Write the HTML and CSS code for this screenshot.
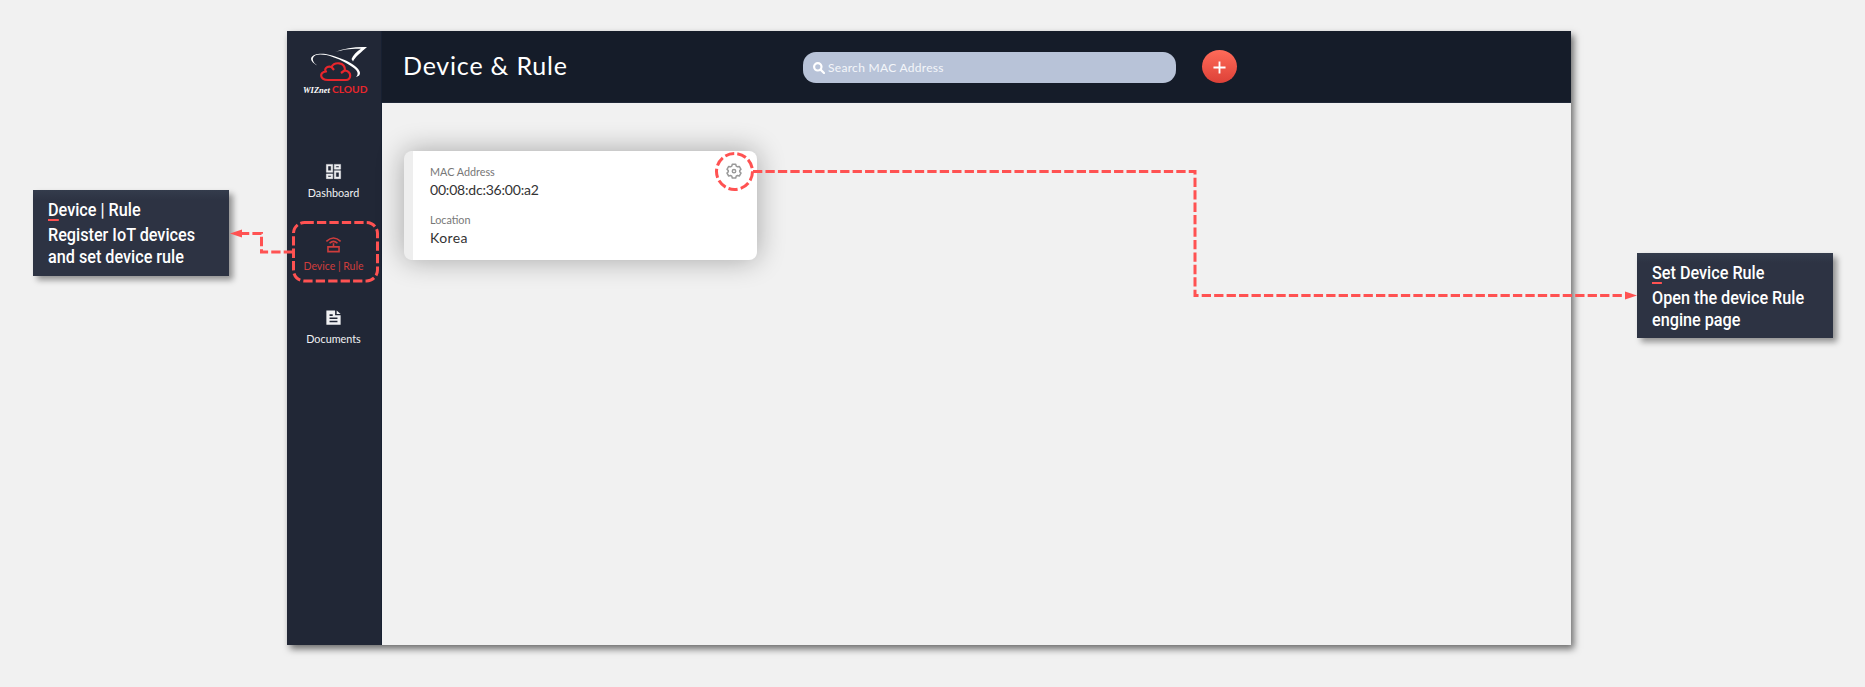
FILE: index.html
```html
<!DOCTYPE html>
<html lang="en">
<head>
<meta charset="utf-8">
<title>Device &amp; Rule</title>
<link rel="stylesheet" href="styles.css">
</head>
<body>
<div class="stage">
  <aside class="callout callout-left">
    <h2><span class="accent">D</span>evice | Rule</h2>
    <p>Register IoT devices<br>and set device rule</p>
  </aside>

  <div class="app">
    <nav class="sidebar">
      <svg class="logo" viewBox="0 0 85 70">
        <path class="white" d="M23 31C8 23 20 16 35 20C51 24 65 32 65 38C65 40 64 41 61 42C65 38 62 34 51 28C38 20 20 16 18 23C17 26 20 29 23 31Z"/>
        <path class="white" d="M40 17C50 13 61 11.500 72 12C67 16.500 60 22 58 26.500L56.500 24C58 20 61.500 16.500 66 13.700C55 13.500 48 14.700 40 17Z"/>
        <path class="cloud" d="M33 45H51C56 45 57.500 37 50 35.500C50 26 39 27 36.500 32C31 30.500 29 35 31 36.500C24 37 24.500 45 33 45ZM49.500 35.500L46 38M36.500 32L39 35"/>
        <text class="brand" x="8" y="57.500" textLength="27" lengthAdjust="spacingAndGlyphs">WIZnet</text>
        <text class="brand-cloud" x="37" y="58" textLength="35.500" lengthAdjust="spacingAndGlyphs">CLOUD</text>
      </svg>
      <div class="menu">
        <a class="item">
          <svg class="bold" viewBox="0 0 24 24"><path d="M19 5v2h-4V5h4M9 5v6H5V5h4m10 8v6h-4v-6h4M9 17v2H5v-2h4M21 3h-8v6h8V3zM11 3H3v10h8V3zm10 8h-8v10h8V11zm-10 4H3v6h8v-6z"/></svg>
          <span>Dashboard</span>
        </a>
        <a class="item active">
          <svg viewBox="0 0 24 24"><path class="line" d="M5 15H19V21H5ZM12 15V10.500M3 8Q12-.5 21 8M7 10.500Q12 5.500 17 10.500"/></svg>
          <span>Device | Rule</span>
        </a>
        <a class="item">
          <svg viewBox="0 0 24 24"><path fill-rule="evenodd" d="M3 3H14V9H21V21H3ZM7 8V10H11V8ZM7 12V14H17V12ZM7 16V18H17V16ZM16 3L21 7.500H16Z"/></svg>
          <span>Documents</span>
        </a>
      </div>
    </nav>
    <div class="main">
      <header class="topbar">
        <h1>Device &amp; Rule</h1>
        <div class="search">
          <svg viewBox="0 0 12 12"><circle cx="4.800" cy="4.800" r="3.700"/><path d="M7.600 7.600L11 11"/></svg>
          <span>Search MAC Address</span>
        </div>
        <button class="add" aria-label="Add device"><svg viewBox="0 0 14 14"><path d="M7 .5V13.500M.5 7H13.500"/></svg></button>
      </header>
      <section class="card">
        <dl>
          <dt>MAC Address</dt>
          <dd class="mac">00:08:dc:36:00:a2</dd>
          <dt class="place">Location</dt>
          <dd class="place">Korea</dd>
        </dl>
        <svg class="gear" viewBox="0 0 16 16"><path d="M6.300 1.300H9.700L10.200 3.100L11.500 3.800L13.300 3.400L15 6.300L13.700 7.600V8.800L15 10.100L13.300 13L11.500 12.500L10.200 13.200L9.700 15H6.300L5.800 13.200L4.500 12.500L2.700 13L1 10.100L2.300 8.800V7.600L1 6.300L2.700 3.400L4.500 3.800L5.800 3.100Z"/><circle cx="8" cy="8.150" r="1.700"/></svg>
      </section>
    </div>
  </div>

  <aside class="callout callout-right">
    <h2><span class="accent">S</span>et Device Rule</h2>
    <p>Open the device Rule<br>engine page</p>
  </aside>

  <svg class="connectors" viewBox="0 0 1865 687">
    <path d="M293 252H261.500V233.500H240"/>
    <path class="head" d="M230 233.500L242 229.500V237.500Z"/>
    <rect x="293.500" y="222.500" width="84" height="58.500" rx="11"/>
    <circle cx="734.500" cy="171.500" r="18"/>
    <path d="M753 171.500H1195V295.500H1627"/>
    <path class="head" d="M1637 295.500L1625 291.500V299.500Z"/>
  </svg>
</div>
</body>
</html>
```
FILE: styles.css
```css
* { box-sizing: border-box; }
body { margin: 0; background: #f1f1f1; font-family: Lato, "Open Sans", sans-serif; }
h1, h2, p, dl, dd { margin: 0; font-weight: 400; }
.stage { position: relative; width: 1865px; height: 687px; overflow: hidden; display: flex; align-items: flex-start; padding-left: 33px; }

.callout { width: 196px; height: 86px; flex: none; padding: 7px 0 0 15px; background: linear-gradient(#343c4c, #2d3343 10px); color: #fff; box-shadow: 4px 4px 6px rgba(0,0,0,.4); font-family: Roboto, sans-serif; }
.callout-left { margin-top: 190px; }
.callout-right { margin: 253px 0 0 66px; height: 85px; }
.callout h2, .callout p { width: max-content; font-size: 18px; line-height: 22px; font-weight: 500; white-space: nowrap; transform: scaleX(.9); transform-origin: 0 0; }
.callout h2 { height: 27px; line-height: 25px; }
.accent { display: inline-block; height: 24px; border-bottom: 2px solid #ff5252; }

.app { display: flex; flex: none; width: 1284px; height: 614px; margin: 31px 0 0 58px; background: #f1f1f1; box-shadow: 3px 4px 7px rgba(0,0,0,.55); }
.sidebar { width: 95px; background: #212736; border-right: 1px solid #172031; }
.logo { display: block; width: 85px; height: 70px; margin: 4px 0 0 8px; }
.white { fill: #fff; }
.cloud { fill: none; stroke: #e8262c; stroke-width: 2.200; stroke-linejoin: round; }
.brand { fill: #fff; font: italic bold 8px "Liberation Serif", serif; }
.brand-cloud { fill: #e8262c; font: bold 10px Lato, sans-serif; }
.menu { padding-top: 57px; }
.item { display: flex; flex-direction: column; align-items: center; height: 73px; width: 93px; color: #f0f1f3; font-size: 10.8px; line-height: 14px; }
.item svg { width: 19px; height: 19px; fill: currentColor; }
.item .bold { stroke: currentColor; stroke-width: .6; }
.item span { margin-top: 5px; white-space: nowrap; }
.item.active { color: #cf3d3c; font-size: 10.500px; }
.item .line { fill: none; stroke: currentColor; stroke-width: 2; }

.main { flex: 1; }
.topbar { display: flex; align-items: flex-start; height: 72px; background: #151c29; color: #fff; padding-left: 21px; border-bottom: 1px solid #202838; }
.topbar h1 { width: 400px; padding-top: 18px; font-size: 25px; line-height: 32px; letter-spacing: .8px; }
.search { display: flex; align-items: center; width: 373px; height: 31px; margin-top: 21px; padding-left: 10px; gap: 3px; border-radius: 13px; background: #b8c3d8; font-size: 12px; }
.search svg { width: 12px; height: 12px; fill: none; stroke: #fff; stroke-width: 2.200; stroke-linecap: round; }
.search span { letter-spacing: .3px; color: #f4f6fa; }
.add { display: grid; place-items: center; width: 35px; height: 33px; margin: 19px 0 0 26px; padding: 2px 0 0; border: 0; border-radius: 50%; background: linear-gradient(#ff6b59, #dd4138); }
.add svg { width: 13px; height: 13px; stroke: #fff; stroke-width: 2; }

.card { display: flex; justify-content: space-between; width: 353px; height: 109px; margin: 48px 0 0 22px; border-left: 9px solid #eee; border-radius: 8px; background: #fff; box-shadow: 0 0 28px rgba(0,0,0,.32); }
.card dl { padding: 14px 0 0 17px; }
.card dt { font-size: 10.800px; line-height: 14px; color: #777; white-space: nowrap; }
.card dd { height: 34px; font-size: 14px; line-height: 22px; color: #333; white-space: nowrap; }
.card .mac { letter-spacing: -.2px; }
.card dd.place { letter-spacing: .4px; }
.gear { width: 16px; height: 16px; margin: 12px 15px 0 0; fill: none; stroke: #999; stroke-width: 1.500; stroke-linejoin: round; }

.connectors { position: absolute; inset: 0; width: 1865px; height: 687px; z-index: 2; fill: none; stroke: #ff5252; stroke-width: 3; stroke-dasharray: 9.300 3.150; }
.connectors .head { fill: #ff5252; stroke: none; }
```
